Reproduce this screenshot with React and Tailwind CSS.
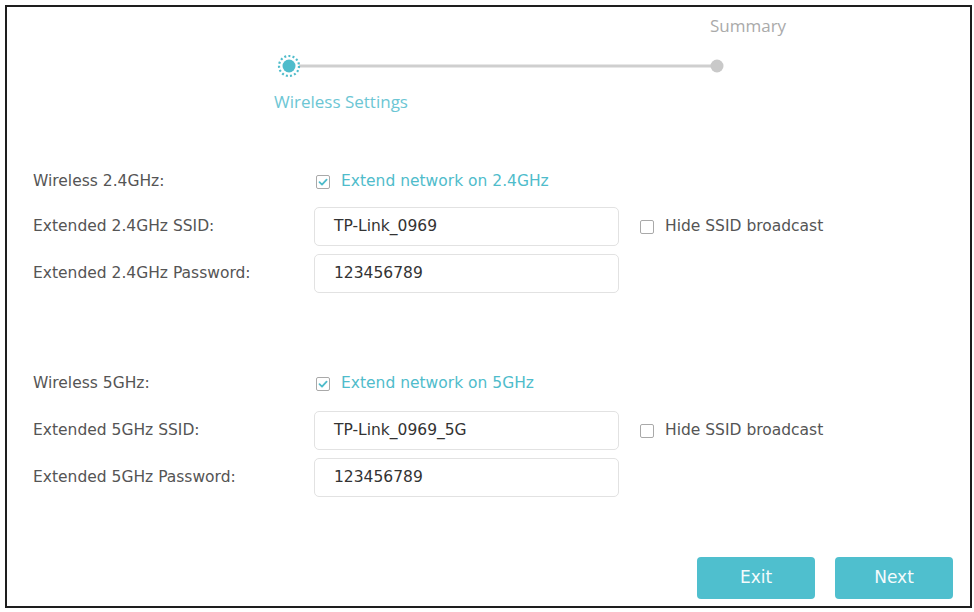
import React from 'react';

const TEAL = '#4fbccb';

const CheckBox = ({ checked }) => (
  <svg width="14" height="14" viewBox="0 0 14 14" className="shrink-0">
    <rect x="0.5" y="0.5" width="13" height="13" rx="1.5" fill="#fff" stroke="#a9a9a9" />
    {checked && (
      <path d="M3.5 7.2 L6 9.6 L10.6 4.6" fill="none" stroke={TEAL} strokeWidth="1.8" strokeLinecap="round" strokeLinejoin="round" />
    )}
  </svg>
);

const Label = ({ children }) => (
  <div className="w-[281px] shrink-0 text-[15.5px] text-[#555]">{children}</div>
);

const TextInput = ({ value }) => (
  <div className="w-[305px] h-[39px] flex items-center pl-[19px] border border-[#e2e2e2] rounded-[5px] text-[15.5px] text-[#333]">
    {value}
  </div>
);

const Band = ({ band, ssid, mt, gap }) => (
  <div className={mt}>
    <div className="flex items-center h-[24px]">
      <Label>Wireless {band}:</Label>
      <div className="flex items-center gap-[11px] pl-[2px]">
        <CheckBox checked />
        <span className="text-[15.5px] text-[#4fbccb]">Extend network on {band}</span>
      </div>
    </div>
    <div className={`flex items-center ${gap}`}>
      <Label>Extended {band} SSID:</Label>
      <TextInput value={ssid} />
      <div className="flex items-center gap-[11px] ml-[21px]">
        <CheckBox />
        <span className="text-[15.5px] text-[#555]">Hide SSID broadcast</span>
      </div>
    </div>
    <div className="flex items-center mt-[8px]">
      <Label>Extended {band} Password:</Label>
      <TextInput value="123456789" />
    </div>
  </div>
);

export default function App() {
  return (
    <div className="w-[974px] h-[612px] bg-white pt-[5px] pl-[5px] font-['DejaVu_Sans',sans-serif]">
      <div className="w-[967px] h-[603px] border-2 border-[#1e1e1e] flex flex-col">
        {/* stepper */}
        <div className="ml-[265px] w-[470px] font-['Open_Sans',sans-serif]">
          <div className="pl-[438px] pt-[9px] text-[17px] leading-[20px] text-[#aaa]">Summary</div>
          <svg width="470" height="24" viewBox="0 0 470 24" className="block mt-[18px]">
            <line x1="17" y1="12" x2="445" y2="12" stroke="#cfcfcf" strokeWidth="3" />
            <circle cx="445" cy="12" r="6.5" fill="#c9c9c9" />
            <circle cx="17" cy="12" r="10" fill="#fff" stroke={TEAL} strokeWidth="2.2" strokeDasharray="2 2.2" />
            <circle cx="17" cy="12" r="6.5" fill={TEAL} />
          </svg>
          <div className="pl-[2px] mt-[14px] text-[17px] leading-[20px] text-[#6cc6d4]">Wireless Settings</div>
        </div>

        {/* form */}
        <div className="pl-[26px]">
          <Band band="2.4GHz" ssid="TP-Link_0969" mt="mt-[58px]" gap="mt-[13px]" />
          <Band band="5GHz" ssid="TP-Link_0969_5G" mt="mt-[79px]" gap="mt-[15px]" />
        </div>

        <div className="mt-auto mb-[7px] mr-[17px] flex justify-end gap-[20px]">
          <button className="w-[118px] h-[42px] rounded-[4px] bg-[#4fbfce] text-[#f4fbfc] text-[17px]">Exit</button>
          <button className="w-[118px] h-[42px] rounded-[4px] bg-[#4fbfce] text-[#f4fbfc] text-[17px]">Next</button>
        </div>
      </div>
    </div>
  );
}
